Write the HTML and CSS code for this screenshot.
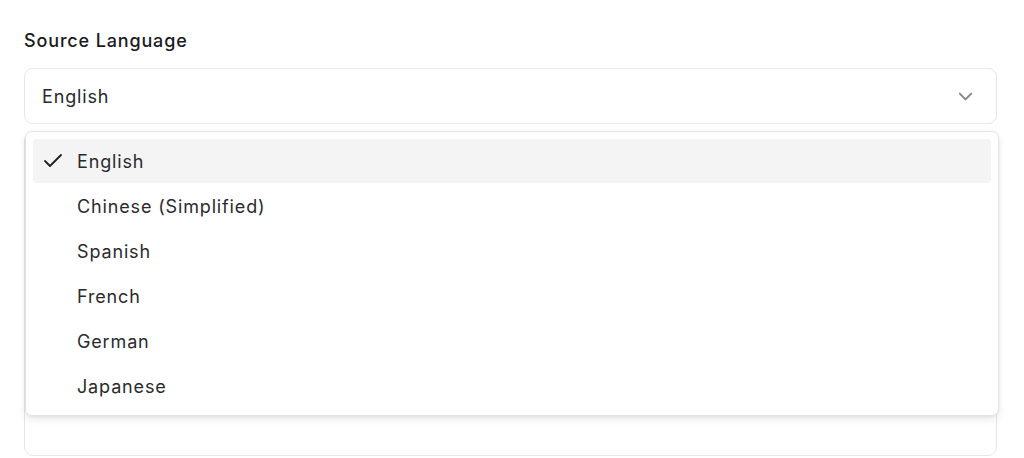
FILE: index.html
```html
<!DOCTYPE html>
<html lang="en">
<head>
    <meta charset="UTF-8">
    <meta name="viewport" content="width=device-width, initial-scale=1.0">
    <title>Source Language</title>
    <link rel="stylesheet" href="styles.css">
</head>
<body>
    <div class="field">
        <label class="label">Source Language</label>
        <div class="select">
            <span>English</span>
            <svg class="chevron" width="23" height="23" viewBox="0 0 24 24" fill="none" stroke="currentColor" stroke-width="2" stroke-linecap="round" stroke-linejoin="round"><path d="m6 9 6 6 6-6"/></svg>
        </div>
        <div class="textarea"></div>

        <ul class="menu">
            <li class="item active">
                <svg class="check" width="24" height="24" viewBox="0 0 24 24" fill="none" stroke="currentColor" stroke-width="1.8" stroke-linecap="round" stroke-linejoin="round"><path d="M20 6 9 17l-5-5"/></svg>
                English
            </li>
            <li class="item">Chinese (Simplified)</li>
            <li class="item">Spanish</li>
            <li class="item">French</li>
            <li class="item">German</li>
            <li class="item">Japanese</li>
        </ul>
    </div>
</body>
</html>
```

FILE: styles.css
```css
body {
    margin: 0;
    padding: 29px 27px 0 24px;
    background: #fff;
    font-family: Inter, "Noto Sans", sans-serif;
    color: #27272a;
    letter-spacing: 0.85px;
}

.field {
    position: relative;
}

.label {
    display: block;
    font-size: 18px;
    line-height: 24px;
    font-weight: 500;
    color: #1a1a22;
    margin-bottom: 15px;
}

.select {
    height: 54px;
    border: 1px solid #e7e7ea;
    border-radius: 9px;
    display: flex;
    align-items: center;
    justify-content: space-between;
    padding: 0 19px 0 17px;
    font-size: 18px;
}

.chevron {
    color: #85858c;
}

.textarea {
    margin-top: 8px;
    height: 322px;
    border: 1px solid #e7e7ea;
    border-radius: 9px;
}

.menu {
    position: absolute;
    top: 102px;
    left: 1px;
    right: -2px;
    margin: 0;
    padding: 7px 7px 6px;
    list-style: none;
    background: #fff;
    border: 1px solid #e4e4e7;
    border-radius: 7px;
    box-shadow: 0 4px 8px rgba(0, 0, 0, 0.08), 0 1px 3px rgba(0, 0, 0, 0.06);
}

.item {
    height: 45px;
    display: flex;
    align-items: center;
    padding-left: 44px;
    font-size: 18px;
    color: #2a2a2e;
    border-radius: 4px;
    position: relative;
}

.item.active {
    background: #f4f4f5;
    height: 44px;
    margin-bottom: 1px;
}

.check {
    position: absolute;
    left: 8px;
    top: 10px;
    color: #1f1f23;
}
```
